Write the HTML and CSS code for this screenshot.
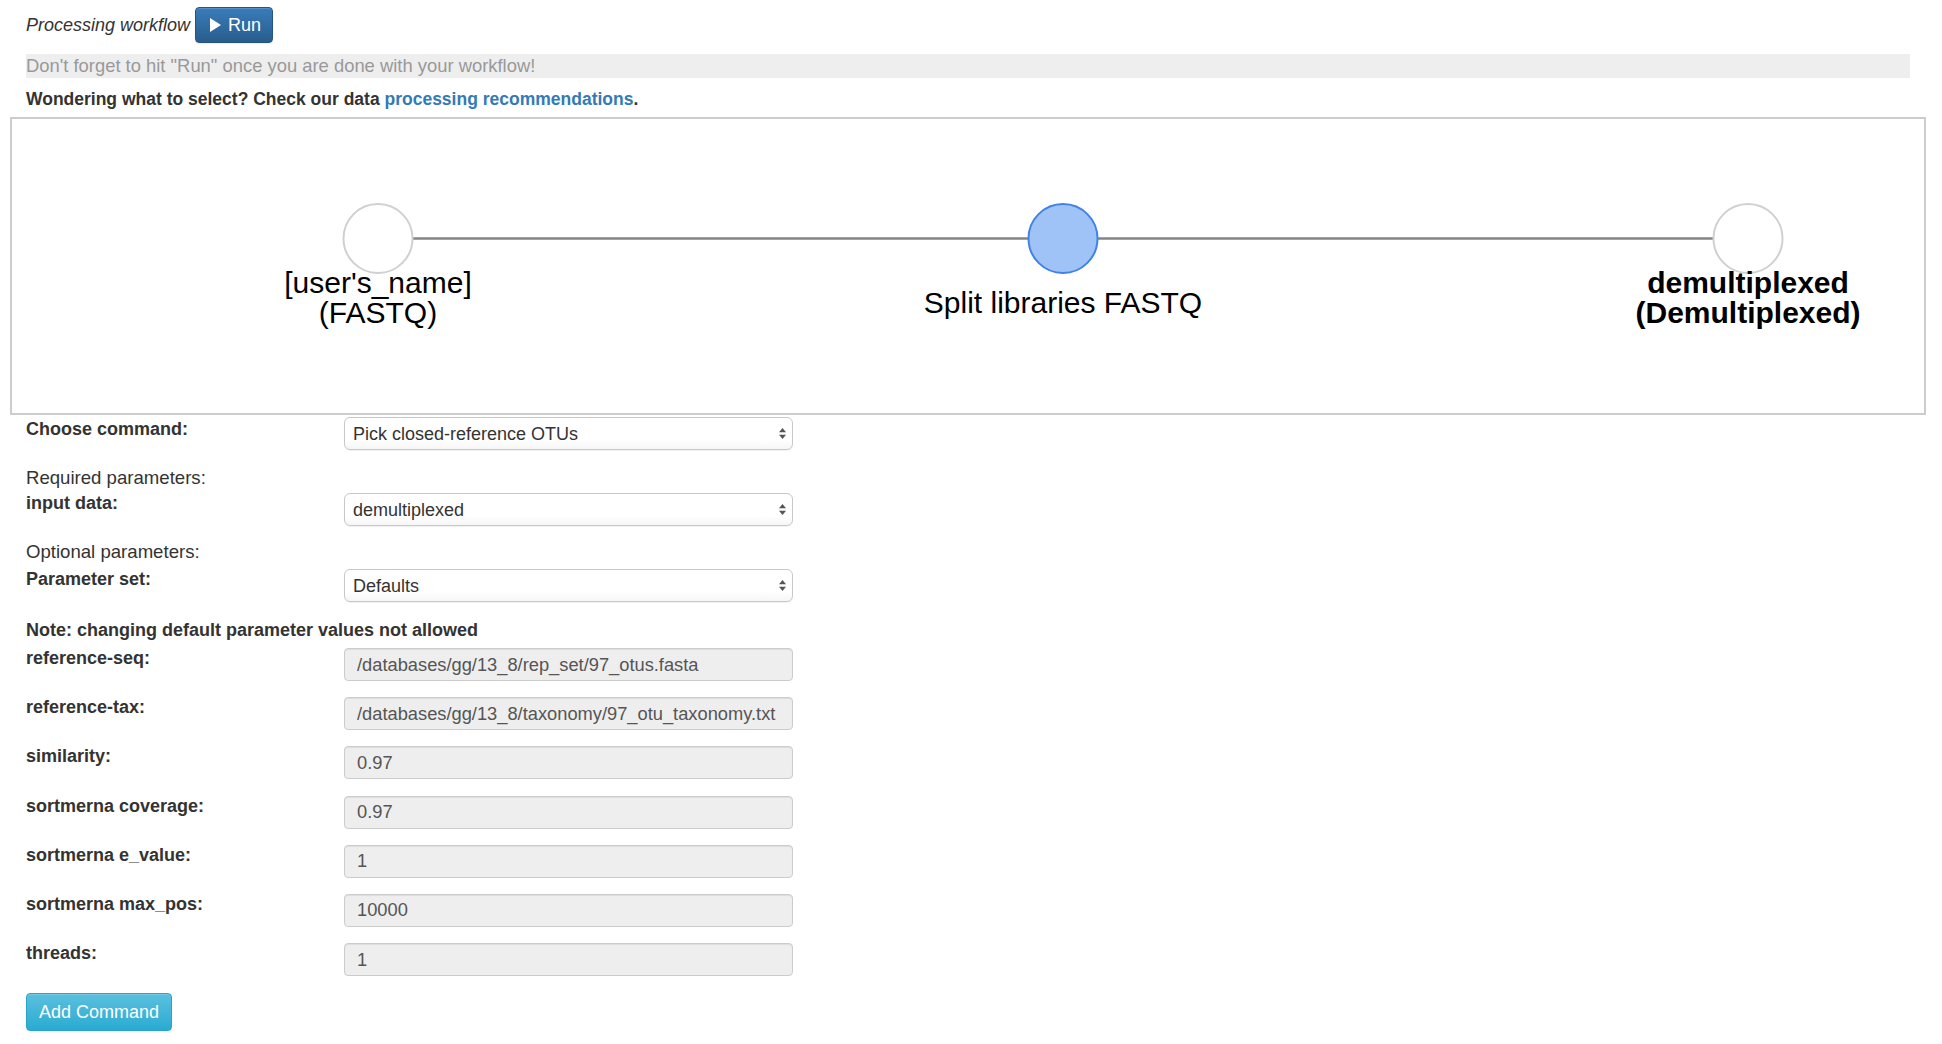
FILE: index.html
```html
<!DOCTYPE html>
<html lang="en">
<head>
<meta charset="utf-8">
<title>Processing workflow</title>
<link rel="stylesheet" href="styles.css">
</head>
<body>
<div class="page">
  <div class="toolbar">
    <span class="toolbar-title">Processing workflow</span>
    <button class="btn btn-run" type="button">
      <svg class="play-icon" width="11" height="14" viewBox="0 0 11 14"><polygon points="0,0 11,7 0,14" fill="#ffffff"/></svg>
      <span>Run</span>
    </button>
  </div>
  <div class="hint">Don't forget to hit "Run" once you are done with your workflow!</div>
  <p class="wonder">Wondering what to select? Check our data <a class="link" href="#">processing recommendations</a>.</p>

  <div class="graph">
    <svg class="graph-canvas" width="1912" height="294" viewBox="0 0 1912 294">
      <line class="edge" x1="400.5" y1="119.5" x2="1016.5" y2="119.5"/>
      <line class="edge" x1="1085.5" y1="119.5" x2="1701.5" y2="119.5"/>
      <circle class="node node-plain" cx="366" cy="119.5" r="34.5"/>
      <circle class="node node-active" cx="1051" cy="119.5" r="34.5"/>
      <circle class="node node-plain" cx="1736" cy="119.5" r="34.5"/>
      <text class="node-label" x="366" y="173.5" text-anchor="middle">[user's_name]</text>
      <text class="node-label" x="366" y="203.5" text-anchor="middle">(FASTQ)</text>
      <text class="node-label" x="1051" y="194" text-anchor="middle">Split libraries FASTQ</text>
      <text class="node-label node-label-bold" x="1736" y="173.5" text-anchor="middle">demultiplexed</text>
      <text class="node-label node-label-bold" x="1736" y="203.5" text-anchor="middle">(Demultiplexed)</text>
    </svg>
  </div>

  <form class="cmd-form">
    <div class="row row-select row-first">
      <label class="row-label">Choose command:</label>
      <div class="select-wrap">
        <select class="select"><option>Pick closed-reference OTUs</option></select>
        <svg class="select-arrows" width="7" height="11" viewBox="0 0 7 11"><polygon points="3.5,0 7,4.2 0,4.2" fill="#555"/><polygon points="0,6.8 7,6.8 3.5,11" fill="#555"/></svg>
      </div>
    </div>
    <div class="section-title section-required">Required parameters:</div>
    <div class="row row-select row-input-data">
      <label class="row-label">input data:</label>
      <div class="select-wrap">
        <select class="select"><option>demultiplexed</option></select>
        <svg class="select-arrows" width="7" height="11" viewBox="0 0 7 11"><polygon points="3.5,0 7,4.2 0,4.2" fill="#555"/><polygon points="0,6.8 7,6.8 3.5,11" fill="#555"/></svg>
      </div>
    </div>
    <div class="section-title section-optional">Optional parameters:</div>
    <div class="row row-select row-paramset">
      <label class="row-label">Parameter set:</label>
      <div class="select-wrap">
        <select class="select"><option>Defaults</option></select>
        <svg class="select-arrows" width="7" height="11" viewBox="0 0 7 11"><polygon points="3.5,0 7,4.2 0,4.2" fill="#555"/><polygon points="0,6.8 7,6.8 3.5,11" fill="#555"/></svg>
      </div>
    </div>
    <div class="note">Note: changing default parameter values not allowed</div>
    <div class="params">
      <div class="row">
        <label class="row-label">reference-seq:</label>
        <input class="input" type="text" readonly value="/databases/gg/13_8/rep_set/97_otus.fasta">
      </div>
      <div class="row">
        <label class="row-label">reference-tax:</label>
        <input class="input" type="text" readonly value="/databases/gg/13_8/taxonomy/97_otu_taxonomy.txt">
      </div>
      <div class="row">
        <label class="row-label">similarity:</label>
        <input class="input" type="text" readonly value="0.97">
      </div>
      <div class="row">
        <label class="row-label">sortmerna coverage:</label>
        <input class="input" type="text" readonly value="0.97">
      </div>
      <div class="row">
        <label class="row-label">sortmerna e_value:</label>
        <input class="input" type="text" readonly value="1">
      </div>
      <div class="row">
        <label class="row-label">sortmerna max_pos:</label>
        <input class="input" type="text" readonly value="10000">
      </div>
      <div class="row">
        <label class="row-label">threads:</label>
        <input class="input" type="text" readonly value="1">
      </div>
    </div>
    <button class="btn btn-add" type="button">Add Command</button>
  </form>
</div>
</body>
</html>
```

FILE: styles.css
```css
* {
  box-sizing: border-box;
}

html, body {
  margin: 0;
  padding: 0;
  background: #ffffff;
}

body {
  font-family: "Liberation Sans", Arial, Helvetica, sans-serif;
  font-size: 18px;
  line-height: 25px;
  color: #333333;
}

.page {
  padding: 7px 16px 0 10px;
}

/* toolbar */
.toolbar {
  display: flex;
  align-items: center;
  gap: 5px;
  height: 36px;
  padding-left: 16px;
}

.toolbar-title {
  font-style: italic;
  color: #333333;
}

.btn {
  font-family: inherit;
  font-size: 18px;
  color: #ffffff;
  border-radius: 4px;
  cursor: pointer;
}

.btn-run {
  display: flex;
  align-items: center;
  gap: 7px;
  height: 36px;
  padding: 0 11px 0 14px;
  background: linear-gradient(to bottom, #3a7cba 0%, #275d8c 100%);
  border: 1px solid #245580;
  box-shadow: inset 0 1px 0 rgba(255, 255, 255, 0.15), 0 1px 1px rgba(0, 0, 0, 0.075);
}

.play-icon {
  display: block;
}

/* hint bar */
.hint {
  margin: 11px 16px 0 16px;
  height: 24px;
  line-height: 24px;
  font-size: 18.4px;
  background: #eeeeee;
  color: #999999;
}

.wonder {
  margin: 9px 0 0 16px;
  font-size: 17.5px;
  font-weight: bold;
  line-height: 25px;
  color: #333333;
}

.link {
  color: #337ab7;
  text-decoration: none;
}

/* graph */
.graph {
  margin-top: 5px;
  height: 298px;
  border: 2px solid #cccccc;
  background: #ffffff;
}

.graph-canvas {
  display: block;
}

.edge {
  stroke: #848484;
  stroke-width: 2.5;
}

.node {
  stroke-width: 2;
}

.node-plain {
  fill: #ffffff;
  stroke: #d0d0d0;
}

.node-active {
  fill: #9fc3f6;
  stroke: #3f83e6;
}

.node-label {
  font-family: "Liberation Sans", Arial, Helvetica, sans-serif;
  font-size: 30px;
  fill: #000000;
}

.node-label-bold {
  font-weight: bold;
}

/* form */
.cmd-form {
  display: flex;
  flex-direction: column;
  align-items: flex-start;
  margin-top: 2px;
  padding-left: 16px;
}

.row {
  display: grid;
  grid-template-columns: 318px 449px;
  align-items: start;
}

.row-label {
  font-weight: bold;
  line-height: 25px;
  margin-top: -2px;
  color: #333333;
}

.row-first .row-label {
  margin-top: 0;
}

.row-first {
  margin-bottom: 15px;
}

.section-title {
  font-size: 18.6px;
  line-height: 25px;
}

.section-required {
  margin-bottom: 3px;
}

.row-input-data {
  margin-bottom: 13px;
}

.section-optional {
  margin-bottom: 5px;
}

.row-paramset {
  margin-bottom: 16px;
}

.note {
  font-weight: bold;
  line-height: 25px;
  margin-bottom: 5px;
}

.select-wrap {
  position: relative;
  height: 33px;
}

.select {
  -webkit-appearance: none;
  appearance: none;
  display: block;
  width: 449px;
  height: 33px;
  padding: 0 24px 0 8px;
  font-family: inherit;
  font-size: 18px;
  color: #333333;
  background: linear-gradient(to bottom, #ffffff 0%, #ffffff 70%, #f6f6f6 100%);
  border: 1px solid #c8c8c8;
  border-radius: 6px;
  box-shadow: 0 1px 1px rgba(0, 0, 0, 0.06);
}

.select-arrows {
  position: absolute;
  right: 7px;
  top: 11px;
  pointer-events: none;
}

.params {
  display: flex;
  flex-direction: column;
  gap: 16.2px;
}

.input {
  display: block;
  width: 449px;
  height: 33px;
  padding: 0 12px;
  font-family: inherit;
  font-size: 18.3px;
  color: #555555;
  background: #eeeeee;
  border: 1px solid #cccccc;
  border-radius: 4px;
  box-shadow: inset 0 1px 1px rgba(0, 0, 0, 0.075);
}

.btn-add {
  margin-top: 17px;
  height: 38px;
  padding: 0 12px;
  background: linear-gradient(to bottom, #5bc0de 0%, #2aabd2 100%);
  border: 1px solid #28a4c9;
  box-shadow: inset 0 1px 0 rgba(255, 255, 255, 0.15), 0 1px 1px rgba(0, 0, 0, 0.075);
}
```
